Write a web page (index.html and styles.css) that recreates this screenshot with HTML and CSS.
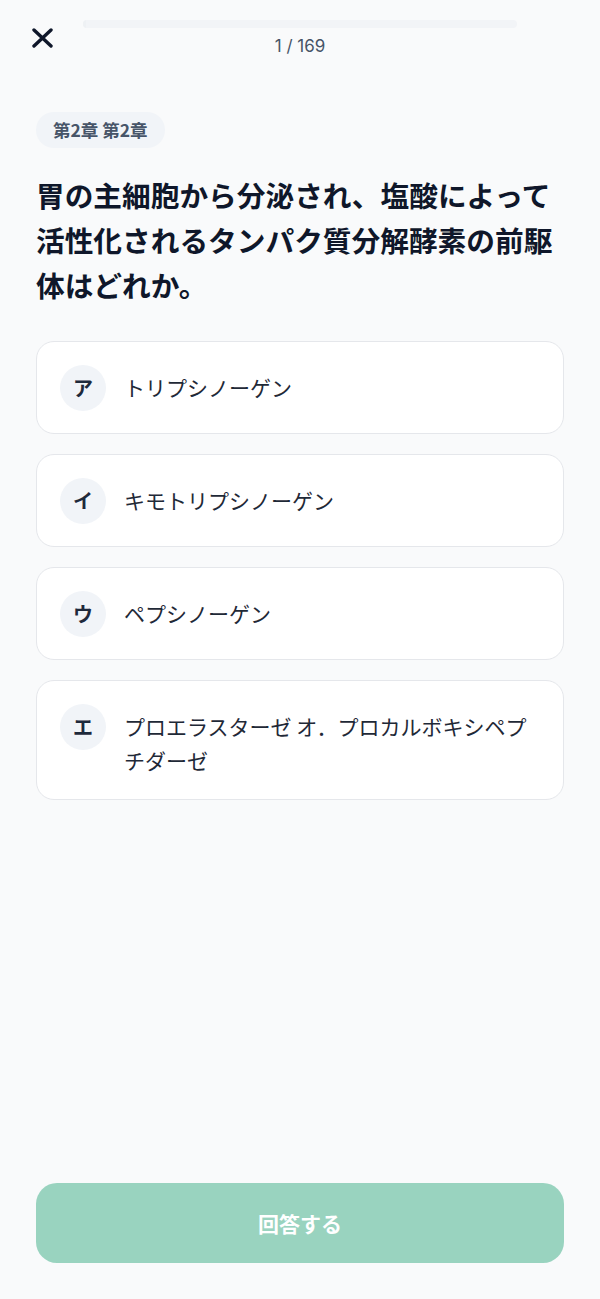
FILE: index.html
```html
<!DOCTYPE html>
<html lang="ja">
<head>
<meta charset="utf-8">
<title>Quiz</title>
<link rel="stylesheet" href="styles.css">
</head>
<body>
<div class="screen">
  <header class="topbar">
    <div class="topbar-left">
      <button class="close-btn" aria-label="閉じる">
        <svg class="close-icon" width="21" height="20" viewBox="0 0 21 20">
          <path d="M2 2 L19 18 M19 2 L2 18" stroke="#0f172a" stroke-width="3.4" stroke-linecap="round" fill="none"/>
        </svg>
      </button>
    </div>
    <div class="progress">
      <div class="progress-track"><div class="progress-fill" style="width:0.6%"></div></div>
      <div class="progress-count">1 / 169</div>
    </div>
    <div class="topbar-right"></div>
  </header>

  <main class="content">
    <div class="chapter-tag">第2章 第2章</div>
    <h1 class="question">胃の主細胞から分泌され、塩酸によって活性化されるタンパク質分解酵素の前駆体はどれか。</h1>

    <div class="options">
      <div class="option">
        <span class="option-badge">ア</span>
        <span class="option-text">トリプシノーゲン</span>
      </div>
      <div class="option">
        <span class="option-badge">イ</span>
        <span class="option-text">キモトリプシノーゲン</span>
      </div>
      <div class="option">
        <span class="option-badge">ウ</span>
        <span class="option-text">ペプシノーゲン</span>
      </div>
      <div class="option">
        <span class="option-badge">エ</span>
        <span class="option-text">プロエラスターゼ オ．プロカルボキシペプチダーゼ</span>
      </div>
    </div>
  </main>

  <footer class="footer">
    <button class="submit-btn">回答する</button>
  </footer>
</div>
</body>
</html>
```

FILE: styles.css
```css
* {
  box-sizing: border-box;
}

html, body {
  margin: 0;
  padding: 0;
  background: #f9fafb;
}

body {
  font-family: "Noto Sans CJK JP", "Noto Sans", sans-serif;
  color: #0f172a;
}

.screen {
  min-height: 100vh;
  display: flex;
  flex-direction: column;
}

.topbar {
  display: grid;
  grid-template-columns: 59px 1fr 59px;
  padding: 20px 24px 0;
}

.topbar-left {
  display: flex;
  align-items: flex-start;
}

.close-btn {
  border: none;
  background: none;
  padding: 0;
  margin: 8px 0 0 8px;
  display: flex;
  cursor: pointer;
}

.close-icon {
  display: block;
}

.progress {
  display: flex;
  flex-direction: column;
  align-items: center;
}

.progress-track {
  width: 100%;
  height: 8px;
  border-radius: 4px;
  background: #f2f4f7;
  overflow: hidden;
}

.progress-fill {
  height: 100%;
  background: #eef1f4;
}

.progress-count {
  margin-top: 6px;
  font-family: "Inter", "Noto Sans", sans-serif;
  font-size: 17px;
  line-height: 24px;
  color: #475467;
}

.content {
  flex: 1;
  padding: 54px 36px 0;
}

.chapter-tag {
  display: inline-block;
  height: 36px;
  padding: 6px 17px;
  border-radius: 18px;
  background: #f1f4f8;
  color: #475569;
  font-size: 17.5px;
  font-weight: 700;
  line-height: 24px;
}

.question {
  margin: 24px 0 0;
  font-size: 28.7px;
  line-height: 45px;
  font-weight: 700;
  color: #0f172a;
}

.options {
  margin-top: 34px;
  display: flex;
  flex-direction: column;
  gap: 20px;
}

.option {
  display: flex;
  align-items: flex-start;
  gap: 18px;
  padding: 22.5px 23px;
  background: #ffffff;
  border: 1px solid #e5e7eb;
  border-radius: 18px;
}

.option-badge {
  flex: none;
  width: 46px;
  height: 46px;
  border-radius: 50%;
  background: #f1f4f8;
  display: flex;
  align-items: center;
  justify-content: center;
  font-size: 20px;
  font-weight: 700;
  color: #1e293b;
}

.option-text {
  flex: 1;
  padding-top: 5px;
  font-size: 21px;
  line-height: 34px;
  color: #1f2937;
}

.footer {
  padding: 0 36px 36px;
}

.submit-btn {
  display: block;
  width: 100%;
  height: 80px;
  border: none;
  border-radius: 21px;
  background: #99d3bf;
  color: #ffffff;
  font-family: "Noto Sans CJK JP", "Noto Sans", sans-serif;
  font-size: 21px;
  font-weight: 700;
}
```
